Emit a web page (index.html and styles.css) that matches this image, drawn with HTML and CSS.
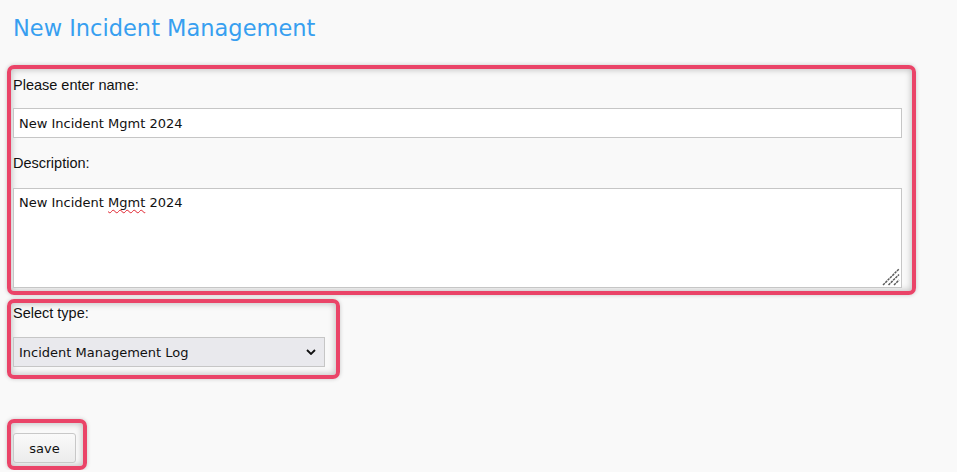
FILE: index.html
```html
<!DOCTYPE html>
<html lang="en">
<head>
<meta charset="utf-8">
<title>New Incident Management</title>
<link rel="stylesheet" href="styles.css">
</head>
<body>
<div class="page">
  <h1 class="title">New Incident Management</h1>

  <div class="mark mark-main">
    <label class="label" for="name">Please enter name:</label>
    <input class="field" id="name" type="text" value="New Incident Mgmt 2024">
    <label class="label label-desc">Description:</label>
    <div class="area-wrap">
      <div class="field area" role="textbox" aria-multiline="true">New Incident <span class="typo">Mgmt</span> 2024</div>
      <svg class="grip" width="18" height="18" viewBox="0 0 18 18">
        <g stroke="#5a5a5a" stroke-width="1.5" stroke-dasharray="2.5 0.8">
          <line x1="1" y1="17" x2="17" y2="1"/>
          <line x1="6.5" y1="17" x2="17" y2="6.5"/>
          <line x1="12" y1="17" x2="17" y2="12"/>
        </g>
      </svg>
    </div>
  </div>

  <div class="mark mark-type">
    <label class="label" for="type">Select type:</label>
    <div class="select">
      <span class="select-text">Incident Management Log</span>
      <svg class="chev" width="10" height="6" viewBox="0 0 10 6"><path d="M1 1 L5 5 L9 1" fill="none" stroke="#111" stroke-width="1.8"/></svg>
    </div>
  </div>

  <div class="mark mark-save">
    <button class="btn" type="button">save</button>
  </div>
</div>
</body>
</html>
```

FILE: styles.css
```css
html, body {
  margin: 0;
  padding: 0;
  background: #f9f9f9;
}
.page {
  padding-left: 7px;
}
.title {
  margin: 15px 0 24px 6px;
  font-family: "DejaVu Sans", Verdana, sans-serif;
  font-weight: normal;
  font-size: 22.5px;
  line-height: 26px;
  color: #379ff0;
}
.mark {
  box-sizing: border-box;
  border: 4px solid #ea4468;
  border-radius: 7px;
  box-shadow: inset 0 0 6px 1px rgba(0,0,0,0.22), 0 0 4px rgba(0,0,0,0.2);
}
.mark-main {
  width: 909px;
  padding: 8px 10px 3px 2px;
}
.mark-type {
  width: 333px;
  margin-top: 4px;
  padding: 2px 11px 8px 2px;
}
.mark-save {
  width: 80px;
  margin-top: 40px;
  padding: 10px 7px 3px 2px;
}
.label {
  display: block;
  font-family: "Liberation Sans", Arial, sans-serif;
  font-size: 14.5px;
  line-height: 16px;
  color: #111;
  margin-bottom: 15px;
}
.label-desc {
  margin-top: 17px;
  margin-bottom: 17px;
}
.mark-type .label {
  margin-bottom: 16px;
}
.field {
  display: block;
  box-sizing: border-box;
  width: 889px;
  height: 30px;
  margin: 0;
  padding: 0 5px;
  border: 1px solid #c6c6c6;
  background: #fff;
  font-family: "DejaVu Sans", Verdana, sans-serif;
  font-size: 13px;
  color: #111;
  outline: none;
}
.area-wrap {
  position: relative;
  width: 889px;
}
.area {
  height: 100px;
  padding: 6px 5px;
  line-height: 16px;
  overflow: hidden;
}
.grip {
  position: absolute;
  right: 2px;
  bottom: 2px;
  display: block;
}
.typo {
  text-decoration: underline wavy #e0242f;
  text-decoration-skip-ink: none;
  text-underline-offset: 2px;
  text-decoration-thickness: 1px;
}
.select {
  box-sizing: border-box;
  width: 312px;
  height: 30px;
  display: flex;
  align-items: center;
  justify-content: space-between;
  padding: 0 8px 0 5px;
  border: 1px solid #c6c6c6;
  background: #e9e9ed;
  font-family: "DejaVu Sans", Verdana, sans-serif;
  font-size: 13px;
  color: #111;
}
.chev {
  display: block;
}
.btn {
  display: block;
  box-sizing: border-box;
  width: 63px;
  height: 30px;
  margin: 0;
  padding: 0;
  border: 1px solid #c8c8c8;
  border-radius: 3px;
  background: linear-gradient(#fafafa, #ececec);
  font-family: "DejaVu Sans", Verdana, sans-serif;
  font-size: 13px;
  color: #111;
}
```
